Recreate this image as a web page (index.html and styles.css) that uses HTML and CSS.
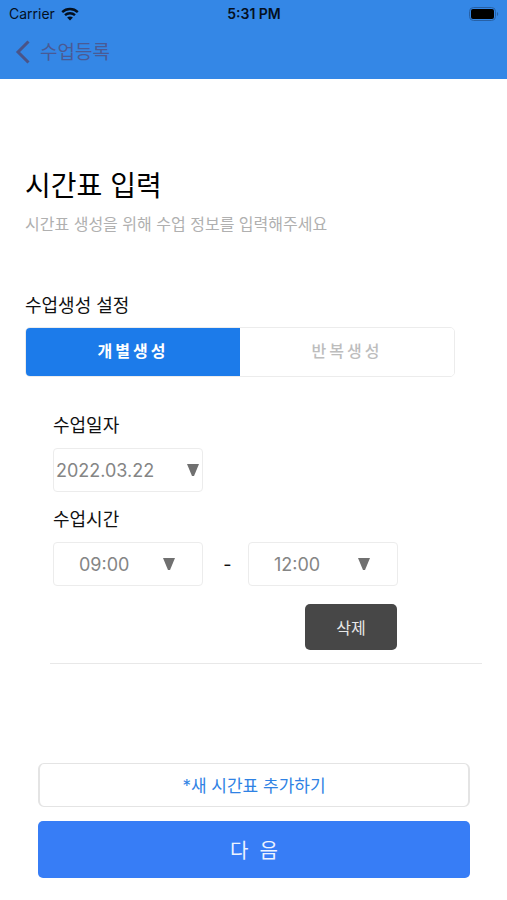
FILE: index.html
```html
<!DOCTYPE html>
<html lang="ko">
<head>
  <meta charset="utf-8">
  <meta name="viewport" content="width=device-width, initial-scale=1">
  <title>수업등록</title>
  <link rel="stylesheet" href="styles.css">
</head>
<body>
  <header class="top">
    <div class="status">
      <div class="carrier">
        <span>Carrier</span>
        <svg class="wifi" viewBox="0 0 18 14" aria-hidden="true">
          <path d="M1.2 5.2C5.6 1 12.4 1 16.8 5.2" />
          <path d="M4 8.2C6.8 5.6 11.2 5.6 14 8.2" />
          <path class="wifi-dot" d="M9 13.6L6.1 10.6C7.7 9.2 10.3 9.2 11.9 10.6Z" />
        </svg>
      </div>
      <time class="clock">5:31 PM</time>
      <svg class="battery" viewBox="0 0 30 14" aria-hidden="true">
        <rect class="battery-case" x="0.5" y="0.5" width="26" height="13" rx="4" />
        <rect x="2" y="2" width="23" height="10" rx="2" />
        <path class="battery-tip" d="M28 5C29.6 5.6 29.6 8.4 28 9Z" />
      </svg>
    </div>
    <nav class="nav">
      <a class="back" href="#">
        <svg class="chevron" viewBox="0 0 16 24" aria-hidden="true"><path d="M13.5 1.5L3 12L13.5 22.5" /></svg>
        <span>수업등록</span>
      </a>
    </nav>
  </header>

  <main class="page">
    <h1 class="title">시간표 입력</h1>
    <p class="subtitle">시간표 생성을 위해 수업 정보를 입력해주세요</p>

    <h2 class="label" id="mode">수업생성 설정</h2>
    <div class="segments" role="group" aria-labelledby="mode">
      <button class="segment selected" type="button" aria-pressed="true">개별생성</button>
      <button class="segment" type="button" aria-pressed="false">반복생성</button>
    </div>

    <form class="schedule">
      <label class="label" for="date">수업일자</label>
      <div class="row">
        <div class="picker date">
          <select id="date"><option>2022.03.22</option></select>
          <svg class="arrow" viewBox="0 0 12 12" aria-hidden="true"><path d="M0 0H12L7 12H5Z" /></svg>
        </div>
      </div>
      <label class="label" for="start">수업시간</label>
      <div class="row">
        <div class="picker">
          <select id="start"><option>09:00</option></select>
          <svg class="arrow" viewBox="0 0 12 12" aria-hidden="true"><path d="M0 0H12L7 12H5Z" /></svg>
        </div>
        <span class="dash">-</span>
        <div class="picker">
          <select id="end" aria-label="종료 시간"><option>12:00</option></select>
          <svg class="arrow" viewBox="0 0 12 12" aria-hidden="true"><path d="M0 0H12L7 12H5Z" /></svg>
        </div>
      </div>
      <button class="delete" type="button">삭제</button>
    </form>

    <div class="actions">
      <button class="add" type="button">*새 시간표 추가하기</button>
      <button class="next" type="button">다&nbsp; 음</button>
    </div>
  </main>
</body>
</html>
```
FILE: styles.css
```css
* {
  box-sizing: border-box;
}

body {
  margin: 0;
  background: #fff;
  color: #111;
  font-family: Inter, "Noto Sans CJK KR", sans-serif;
}

button,
select {
  margin: 0;
  padding: 0;
  font-family: inherit;
}

.top {
  height: 79px;
  background: #3487e6;
}

.status {
  display: grid;
  grid-template-columns: 1fr auto 1fr;
  align-items: center;
  height: 28px;
  padding: 0 8px 0 9px;
  color: #04101f;
  font-size: 14px;
  line-height: 28px;
}

.carrier {
  display: flex;
  align-items: center;
  gap: 6px;
}

.wifi {
  width: 18px;
  height: 14px;
  fill: none;
  stroke: #04101f;
  stroke-width: 2.4;
}

.wifi .wifi-dot {
  fill: #04101f;
  stroke: none;
}

.clock {
  font-weight: 600;
}

.battery {
  justify-self: end;
  width: 30px;
  height: 14px;
}

.battery-case {
  fill: none;
  stroke: #2760a5;
}

.battery-tip {
  fill: #2760a5;
}

.nav {
  display: flex;
  align-items: center;
  height: 48px;
  padding-left: 15px;
}

.back {
  display: flex;
  align-items: center;
  gap: 9px;
  color: #4a5a94;
  font-size: 19px;
  line-height: 30px;
  text-decoration: none;
}

.back span {
  padding-top: 2px;
}

.chevron {
  width: 16px;
  height: 24px;
  fill: none;
  stroke: #4a5488;
  stroke-width: 3;
}

.page {
  padding: 86px 25px 20px;
}

.title {
  margin: 0;
  color: #000;
  font-size: 28px;
  font-weight: 400;
  line-height: 42px;
}

.subtitle {
  margin: 5px 0 56px;
  color: #b0b0b0;
  font-size: 16px;
  line-height: 24px;
}

.label {
  display: block;
  margin: 0;
  font-size: 18px;
  font-weight: 400;
  line-height: 28px;
}

.segments {
  display: flex;
  margin: 7px 27px 0 0;
  border: 1px solid #ececec;
  border-radius: 5px;
}

.segment {
  flex: 1;
  height: 48px;
  padding-bottom: 4px;
  border: 0;
  border-radius: 0 4px 4px 0;
  background: #fff;
  color: #bdbdbd;
  font-size: 16px;
  font-weight: 500;
  letter-spacing: 3px;
}

.segment.selected {
  border-radius: 4px 0 0 4px;
  background: #1c7bea;
  color: #fff;
  font-weight: 700;
}

.schedule {
  display: flex;
  flex-direction: column;
  margin-left: 25px;
  padding: 35px 0 13px 3px;
  border-bottom: 1px solid #e8e8e8;
}

.row {
  display: flex;
  align-items: center;
  margin: 8px 0 14px;
}

.picker {
  position: relative;
  width: 150px;
  height: 44px;
}

.picker select {
  width: 100%;
  height: 100%;
  padding-left: 25px;
  border: 1px solid #ececec;
  border-radius: 4px;
  background: #fff;
  color: #858585;
  font-size: 18px;
  appearance: none;
}

.picker.date select {
  padding-left: 2px;
}

.arrow {
  position: absolute;
  top: 16px;
  right: 28px;
  width: 12px;
  height: 12px;
  fill: #707070;
  pointer-events: none;
}

.date .arrow {
  right: 4px;
}

.dash {
  width: 45px;
  padding-left: 4px;
  font-size: 18px;
  text-align: center;
}

.delete {
  width: 92px;
  height: 46px;
  margin: 4px 0 0 252px;
  border: 0;
  border-radius: 5px;
  background: #474747;
  color: #e8e8e8;
  font-size: 16px;
}

.actions {
  display: flex;
  flex-direction: column;
  gap: 14px;
  margin: 99px 12px 0 13px;
}

.add {
  height: 44px;
  padding-bottom: 2px;
  border: 1px solid #e4e4e4;
  border-width: 1px 2px;
  border-radius: 6px;
  background: #fff;
  color: #2f82e4;
  font-size: 17px;
}

.next {
  height: 57px;
  border: 0;
  border-radius: 5px;
  background: #377df6;
  color: #edf3ff;
  font-size: 20px;
}
```
